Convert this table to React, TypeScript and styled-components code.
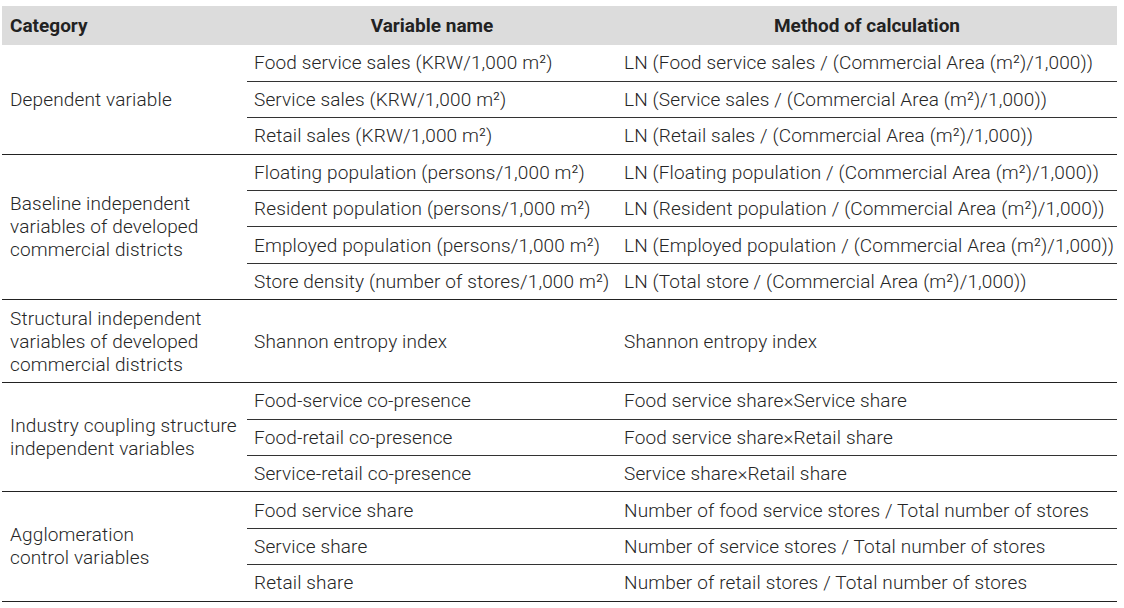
import * as React from "react";
import styled, { createGlobalStyle } from "styled-components";

const GlobalStyle = createGlobalStyle`
  html, body {
    margin: 0;
    padding: 0;
    background: #fff;
  }
  body {
    font-family: Roboto, "Liberation Sans", Arial, sans-serif;
    color: #262626;
  }
`;

type Group = {
  category: string[];
  height?: number;
  rows: [string, string][];
};

const groups: Group[] = [
  {
    category: ["Dependent variable"],
    rows: [
      ["Food service sales (KRW/1,000 m²)", "LN (Food service sales / (Commercial Area (m²)/1,000))"],
      ["Service sales (KRW/1,000 m²)", "LN (Service sales / (Commercial Area (m²)/1,000))"],
      ["Retail sales (KRW/1,000 m²)", "LN (Retail sales / (Commercial Area (m²)/1,000))"],
    ],
  },
  {
    category: ["Baseline independent", "variables of developed", "commercial districts"],
    rows: [
      ["Floating population (persons/1,000 m²)", "LN (Floating population / (Commercial Area (m²)/1,000))"],
      ["Resident population (persons/1,000 m²)", "LN (Resident population / (Commercial Area (m²)/1,000))"],
      ["Employed population (persons/1,000 m²)", "LN (Employed population / (Commercial Area (m²)/1,000))"],
      ["Store density (number of stores/1,000 m²)", "LN (Total store / (Commercial Area (m²)/1,000))"],
    ],
  },
  {
    category: ["Structural independent", "variables of developed", "commercial districts"],
    height: 83,
    rows: [["Shannon entropy index", "Shannon entropy index"]],
  },
  {
    category: ["Industry coupling structure", "independent variables"],
    rows: [
      ["Food-service co-presence", "Food service share×Service share"],
      ["Food-retail co-presence", "Food service share×Retail share"],
      ["Service-retail co-presence", "Service share×Retail share"],
    ],
  },
  {
    category: ["Agglomeration", "control variables"],
    rows: [
      ["Food service share", "Number of food service stores / Total number of stores"],
      ["Service share", "Number of service stores / Total number of stores"],
      ["Retail share", "Number of retail stores / Total number of stores"],
    ],
  },
];

const Page = styled.div`
  padding: 6px 0 0 2px;
`;

const Table = styled.table`
  width: 1115px;
  border-collapse: collapse;
  table-layout: fixed;
  font-size: 19px;
  font-weight: 300;
  letter-spacing: 0.14px;
  border-bottom: 1.5px solid #222;
`;

const HeadRow = styled.tr`
  height: 39px;
  background: #dcdcdc;
`;

const HeadCell = styled.th<{ $align?: "left" | "center" }>`
  text-align: ${(p) => p.$align ?? "center"};
  font-weight: 700;
  letter-spacing: 0;
  color: #222;
  padding: 0 8px;
  vertical-align: middle;
`;

const BodyRow = styled.tr<{ $h: number }>`
  height: ${(p) => p.$h}px;
`;

const CategoryCell = styled.td<{ $first: boolean }>`
  padding: 0 8px;
  line-height: 23px;
  vertical-align: middle;
  border-top: ${(p) => (p.$first ? "none" : "1.5px solid #222")};
`;

const Cell = styled.td<{ $topLine: "none" | "group" | "row" }>`
  padding: 0 7px;
  vertical-align: middle;
  white-space: nowrap;
  border-top: ${(p) =>
    p.$topLine === "group" ? "1.5px solid #222" : p.$topLine === "row" ? "1px solid #333" : "none"};
`;

export default function App() {
  return (
    <Page>
      <GlobalStyle />
      <Table>
        <colgroup>
          <col style={{ width: 245 }} />
          <col style={{ width: 370 }} />
          <col style={{ width: 500 }} />
        </colgroup>
        <thead>
          <HeadRow>
            <HeadCell $align="left">Category</HeadCell>
            <HeadCell>Variable name</HeadCell>
            <HeadCell>Method of calculation</HeadCell>
          </HeadRow>
        </thead>
        <tbody>
          {groups.map((g, gi) =>
            g.rows.map(([name, method], ri) => {
              const line = ri > 0 ? "row" : gi > 0 ? "group" : "none";
              return (
                <BodyRow key={`${gi}-${ri}`} $h={g.height ?? 36.4}>
                  {ri === 0 && (
                    <CategoryCell rowSpan={g.rows.length} $first={gi === 0}>
                      {g.category.map((c, ci) => (
                        <div key={ci}>{c}</div>
                      ))}
                    </CategoryCell>
                  )}
                  <Cell $topLine={line}>{name}</Cell>
                  <Cell $topLine={line}>{method}</Cell>
                </BodyRow>
              );
            })
          )}
        </tbody>
      </Table>
    </Page>
  );
}
